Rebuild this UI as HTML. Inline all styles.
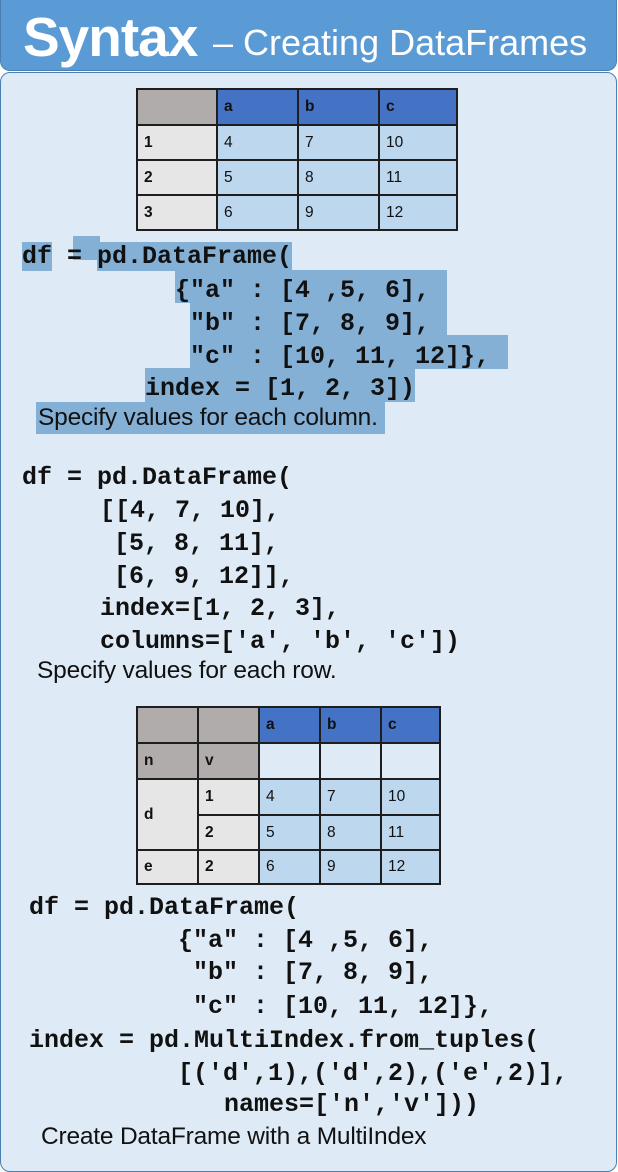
<!DOCTYPE html>
<html><head><meta charset="utf-8"><style>
*{margin:0;padding:0;box-sizing:border-box}
body{width:618px;height:1160px;position:relative;overflow:hidden;background:#fff;font-family:"Liberation Sans",sans-serif}
.hdr{position:absolute;left:0;top:0;width:617px;height:71px;background:#5b9bd5;border-radius:0 0 10px 10px;border:1.5px solid #4a7fb0;border-top:none}
.panel{position:absolute;left:0;top:72px;width:617px;height:1100px;background:#deebf7;border:1.5px solid #4a7fb0;border-radius:10px}
.t1{position:absolute;left:22px;top:5px;color:#fff;font-weight:bold;font-size:55px;letter-spacing:-1px;line-height:64px}
.t2{position:absolute;left:212px;top:19px;color:#fff;font-size:36px;line-height:48px}
.c{position:absolute;font-family:"Liberation Mono",monospace;font-weight:bold;font-size:25px;line-height:32px;height:32px;white-space:pre;color:#111}
.h{background:#85b0d6}
.cap{position:absolute;font-size:24.5px;line-height:30px;white-space:pre;color:#111;letter-spacing:-0.2px}
table{position:absolute;border-collapse:collapse;font-size:15.5px;table-layout:fixed}
td{border:2px solid #1e1e1e;padding:0 0 0 6px;color:#111}
.g{background:#b0acab;font-weight:bold}
.bh{background:#4472c4;font-weight:bold}
.l{background:#e6e6e6;font-weight:bold}
.v{background:#bdd7ee}
.w{background:#deebf7}
</style></head><body>
<div class="hdr"><span class="t1">Syntax</span><span class="t2">– Creating DataFrames</span></div>
<div class="panel"></div>

<table style="left:136px;top:88px;width:322px;height:143px">
<tr style="height:36px"><td class="g" style="width:80px"></td><td class="bh" style="width:81px">a</td><td class="bh" style="width:81px">b</td><td class="bh">c</td></tr>
<tr><td class="l">1</td><td class="v">4</td><td class="v">7</td><td class="v">10</td></tr>
<tr><td class="l">2</td><td class="v">5</td><td class="v">8</td><td class="v">11</td></tr>
<tr><td class="l">3</td><td class="v">6</td><td class="v">9</td><td class="v">12</td></tr>
</table>

<div class="h" style="position:absolute;left:73px;top:236px;width:27px;height:24px"></div>
<div class="c" style="left:22px;top:241px"><span class="h">df</span> = <span class="h">pd.DataFrame(</span></div>
<div class="h" style="position:absolute;left:175px;top:270px;width:272px;height:33px"></div>
<div class="c" style="left:175px;top:275px">{"a" : [4 ,5, 6],</div>
<div class="h" style="position:absolute;left:190px;top:303px;width:257px;height:33px"></div>
<div class="c" style="left:190px;top:308px">"b" : [7, 8, 9],</div>
<div class="h" style="position:absolute;left:190px;top:335px;width:318px;height:34px"></div>
<div class="c" style="left:190px;top:341px">"c" : [10, 11, 12]},</div>
<div class="h" style="position:absolute;left:145px;top:368px;width:270px;height:34px"></div>
<div class="c" style="left:145px;top:373px">index = [1, 2, 3])</div>
<div class="h" style="position:absolute;left:36px;top:402px;width:349px;height:32px"></div>
<div class="cap" style="left:38px;top:403px">Specify values for each column.</div>

<div class="c" style="left:22px;top:462px">df = pd.DataFrame(</div>
<div class="c" style="left:100px;top:495px">[[4, 7, 10],</div>
<div class="c" style="left:114px;top:528px">[5, 8, 11],</div>
<div class="c" style="left:114px;top:561px">[6, 9, 12]],</div>
<div class="c" style="left:100px;top:593px">index=[1, 2, 3],</div>
<div class="c" style="left:100px;top:626px">columns=['a', 'b', 'c'])</div>
<div class="cap" style="left:37px;top:656px">Specify values for each row.</div>

<table style="left:136px;top:706px;width:305px;height:179px">
<tr style="height:36px"><td class="g" style="width:61px"></td><td class="g" style="width:61px"></td><td class="bh" style="width:61px">a</td><td class="bh" style="width:61px">b</td><td class="bh">c</td></tr>
<tr style="height:36px"><td class="g">n</td><td class="g">v</td><td class="w"></td><td class="w"></td><td class="w"></td></tr>
<tr style="height:36px"><td class="l" rowspan="2">d</td><td class="l">1</td><td class="v">4</td><td class="v">7</td><td class="v">10</td></tr>
<tr style="height:35px"><td class="l">2</td><td class="v">5</td><td class="v">8</td><td class="v">11</td></tr>
<tr><td class="l">e</td><td class="l">2</td><td class="v">6</td><td class="v">9</td><td class="v">12</td></tr>
</table>

<div class="c" style="left:29px;top:892px">df = pd.DataFrame(</div>
<div class="c" style="left:178px;top:925px">{"a" : [4 ,5, 6],</div>
<div class="c" style="left:193px;top:957px">"b" : [7, 8, 9],</div>
<div class="c" style="left:193px;top:991px">"c" : [10, 11, 12]},</div>
<div class="c" style="left:29px;top:1025px">index = pd.MultiIndex.from_tuples(</div>
<div class="c" style="left:178px;top:1058px">[('d',1),('d',2),('e',2)],</div>
<div class="c" style="left:224px;top:1089px">names=['n','v']))</div>
<div class="cap" style="left:41px;top:1122px">Create DataFrame with a MultiIndex</div>
</body></html>
